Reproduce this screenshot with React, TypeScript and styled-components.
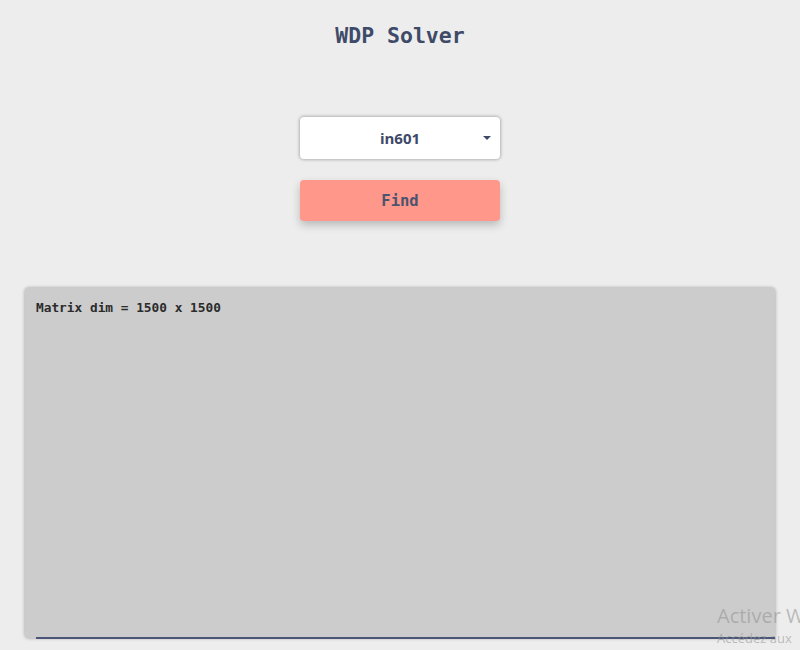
import React from "react";
import styled, { createGlobalStyle } from "styled-components";

const Global = createGlobalStyle`
  html, body { margin: 0; padding: 0; background: #ededed; }
  body { font-family: "Open Sans", "Noto Sans", sans-serif; overflow: hidden; }
`;

const Page = styled.div`
  width: 800px;
  height: 650px;
  display: flex;
  flex-direction: column;
  align-items: center;
  box-sizing: border-box;
  position: relative;
`;

const Title = styled.h1`
  margin: 23px 0 0;
  font-family: "DejaVu Sans Mono", "Liberation Mono", monospace;
  font-weight: bold;
  font-size: 21.5px;
  line-height: 26px;
  color: #3e4a68;
`;

const Controls = styled.div`
  margin-top: 68px;
  display: flex;
  flex-direction: column;
  gap: 21px;
  width: 200px;
`;

const SelectBox = styled.div`
  height: 42px;
  background: #fff;
  border-radius: 4px;
  box-shadow: 0 0 3px 1px rgba(0, 0, 0, 0.25);
  display: flex;
  align-items: center;
  justify-content: center;
  position: relative;
  font-family: "Open Sans", "Noto Sans", sans-serif;
  font-weight: bold;
  font-size: 15px;
  color: #3e4a68;
`;

const Caret = styled.span`
  position: absolute;
  right: 9px;
  top: 19px;
  width: 0;
  height: 0;
  border-left: 4px solid transparent;
  border-right: 4px solid transparent;
  border-top: 4px solid #3e4a68;
`;

const FindButton = styled.button`
  height: 41px;
  border: none;
  border-radius: 4px;
  background: #ff978a;
  box-shadow: 0 4px 8px rgba(0, 0, 0, 0.22);
  font-family: "DejaVu Sans Mono", "Liberation Mono", monospace;
  font-weight: bold;
  font-size: 15.5px;
  color: #4a5470;
  cursor: pointer;
`;

const Panel = styled.div`
  margin-top: 67px;
  width: 750px;
  height: 350px;
  box-sizing: border-box;
  background: #cccccc;
  border-radius: 4px;
  box-shadow: 0 0 3px 1px rgba(0, 0, 0, 0.22);
  display: flex;
  flex-direction: column;
  padding: 12px 0 0 11px;
`;

const Output = styled.pre`
  margin: 0;
  font-family: "DejaVu Sans Mono", "Liberation Mono", monospace;
  font-weight: bold;
  font-size: 12.8px;
  line-height: 16px;
  color: #2b2b2b;
`;

const Fill = styled.div`
  flex: 1;
  border-bottom: 2px solid #4a5578;
  margin-bottom: -1px;
`;

const Watermark = styled.div`
  position: absolute;
  left: 717px;
  top: 606px;
  font-family: "Open Sans", "Noto Sans", sans-serif;
  color: rgba(150, 150, 150, 0.6);
  white-space: nowrap;
  line-height: 1;
`;

const WmTitle = styled.div`
  font-size: 20px;
`;

const WmSub = styled.div`
  font-size: 13px;
  margin-top: 6px;
`;

export default function App() {
  return (
    <>
      <Global />
      <Page>
        <Title>WDP Solver</Title>
        <Controls>
          <SelectBox>
            in601
            <Caret />
          </SelectBox>
          <FindButton>Find</FindButton>
        </Controls>
        <Panel>
          <Output>Matrix dim = 1500 x 1500</Output>
          <Fill />
        </Panel>
        <Watermark>
          <WmTitle>Activer W</WmTitle>
          <WmSub>Accédez aux</WmSub>
        </Watermark>
      </Page>
    </>
  );
}
